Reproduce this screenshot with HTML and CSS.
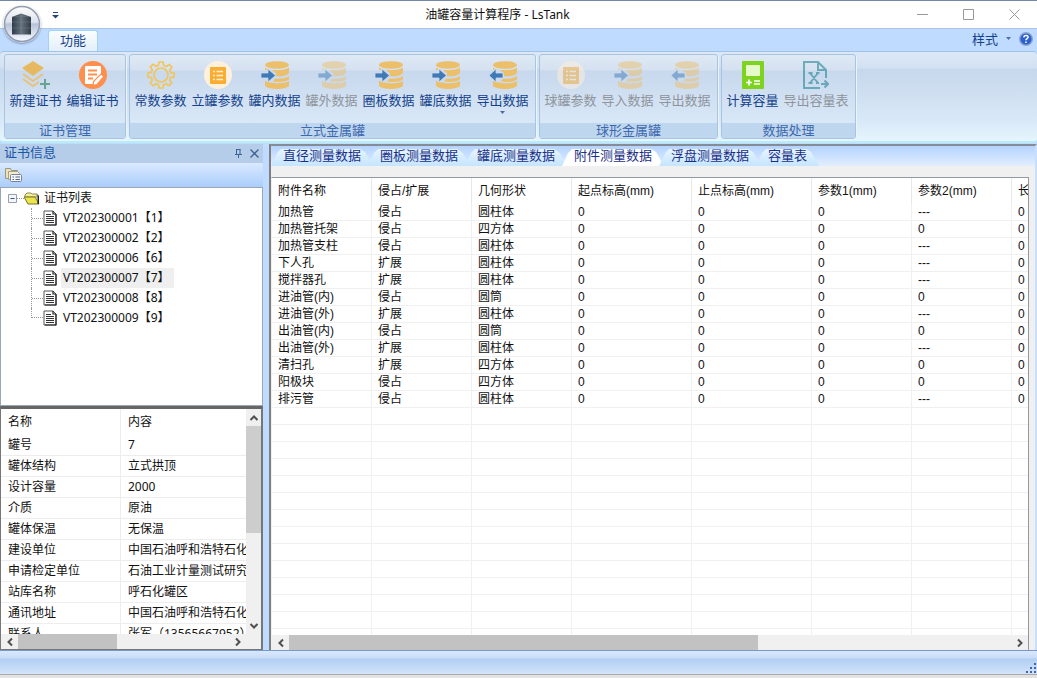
FILE: index.html
```html
<!DOCTYPE html>
<html lang="zh-CN">
<head>
    <meta charset="UTF-8">
    <meta name="viewport" content="width=device-width, initial-scale=1.0">
    <title>油罐容量计算程序 - LsTank</title>
    <link rel="stylesheet" href="styles.css">
</head>
<body>

    <!-- Shared icons -->
    <svg class="sprite" aria-hidden="true">
        <symbol id="database" viewBox="0 0 28 28">
            <g fill="#ecc06b">
                <ellipse cx="16" cy="4" rx="12" ry="3.800"/>
                <path d="M4 6.500c3 3.500 20 3.500 24 0v5.500c-2 2.800-8 3.800-13 3.200V12L10 8.500 4 9z"/>
                <path d="M14 17.500c5 .7 11 0 14-2.500v3.500c-3 2.500-11 3-16 2z"/>
                <path d="M4 19.500c5 3.500 20 3.500 24 .5V25c-4 4-20 4-24 0z"/>
            </g>
        </symbol>
        <symbol id="import" viewBox="0 0 28 28">
            <use href="#database" width="28" height="28"/>
            <path d="M0 12h7V8l7.500 6.500L7 21v-4H0z" fill="#4179b5" stroke="#cddcf0" stroke-width=".8"/>
        </symbol>
        <symbol id="export" viewBox="0 0 28 28">
            <use href="#database" width="28" height="28"/>
            <path d="M14 12H7V8l-7 6.500L7 21v-4h7z" fill="#4179b5" stroke="#cddcf0" stroke-width=".8"/>
        </symbol>
        <symbol id="list" viewBox="0 0 28 28">
            <circle cx="14" cy="14" r="14" fill="#fdf0dc"/>
            <rect x="6" y="6" width="16" height="17" rx="1" fill="#fbac32"/>
            <path d="M9 10.500h2M9 14.500h2M9 18.500h2M12.500 10.500H19M12.500 14.500H19M12.500 18.500H19" stroke="#fff0cf" stroke-width="1.700"/>
        </symbol>
        <symbol id="document" viewBox="0 0 14 16">
            <path d="M1 1h9l3 3v11H1z" fill="#fff" stroke="#555"/>
            <path d="M10 1v3h3M13 4v11H2" fill="none" stroke="#222" stroke-width="1.200"/>
            <path d="M3 4.500h5M3 6.500h8M3 8.500h8M3 10.500h8M3 12.500h8" stroke="#333"/>
        </symbol>
        <symbol id="chevron" viewBox="0 0 10 10">
            <path d="M3 1.500L6.500 5 3 8.500" fill="none" stroke="#505050" stroke-width="2"/>
        </symbol>
    </svg>

    <header class="titlebar">
        <div class="quick-access">
            <button class="orb" aria-label="LsTank">
                <svg width="38" height="38" viewBox="0 0 38 38">
                    <defs>
                        <linearGradient id="orbFill" x2="0" y2="1">
                            <stop offset="0" stop-color="#fdfdfe"/><stop offset=".45" stop-color="#dde2ec"/>
                            <stop offset=".5" stop-color="#b8c3d9"/><stop offset="1" stop-color="#f8faff"/>
                        </linearGradient>
                        <linearGradient id="tankFill">
                            <stop offset="0" stop-color="#303c47"/><stop offset=".5" stop-color="#65727d"/>
                            <stop offset="1" stop-color="#303b46"/>
                        </linearGradient>
                    </defs>
                    <circle cx="19" cy="19" r="17.500" fill="url(#orbFill)" stroke="#949dae" stroke-width="1.500"/>
                    <path d="M9 12l9-3.500L28 12v17.500H9z" fill="url(#tankFill)"/>
                    <path d="M9 12l9-1 10 1M18 9v20M9 17h19M9 23h19" fill="none" stroke="#7d8b96" stroke-width=".6" opacity=".6"/>
                </svg>
            </button>
            <button class="quick-menu" aria-label="自定义快速访问工具栏">
                <svg width="7" height="7" viewBox="0 0 7 7"><path d="M1 .5h5" stroke="#23467f"/><path d="M0 3h7L3.500 6.500z" fill="#23467f"/></svg>
            </button>
        </div>
        <div class="window-title">油罐容量计算程序 - LsTank</div>
        <div class="window-buttons">
            <button aria-label="最小化"><svg width="11" height="11"><path d="M0 5.500h11" stroke="#999"/></svg></button>
            <button aria-label="最大化"><svg width="11" height="11"><path d="M.5.5h10v10H.5z" fill="none" stroke="#999"/></svg></button>
            <button aria-label="关闭"><svg width="11" height="11"><path d="M.5.5l10 10M10.500.5l-10 10" stroke="#999"/></svg></button>
        </div>
    </header>

    <nav class="ribbon-tabs">
        <button class="ribbon-tab">功能</button>
        <div class="style-menu">
            <button class="style-button">样式
                <svg width="5" height="3" viewBox="0 0 5 3"><path d="M0 0h5L2.500 3z" fill="#4c6d9f"/></svg>
            </button>
            <button class="help" aria-label="帮助">
                <svg width="14" height="14" viewBox="0 0 14 14">
                    <circle cx="7" cy="7" r="6.300" fill="#2c62cf" stroke="#8da4cc" stroke-width="1.400"/>
                    <path d="M4.800 5.400C5 2.700 9.600 3 9.100 5.400 8.800 6.700 7 6.600 7 8.300M7 9.500v1.500" fill="none" stroke="#fff" stroke-width="1.500"/>
                </svg>
            </button>
        </div>
    </nav>

    <!-- Ribbon -->
    <section class="ribbon">
        <div class="group">
            <div class="group-buttons">
                <button class="tool">
                    <svg width="28" height="28" viewBox="0 0 28 28">
                        <path d="M11 0l11 7-11 8L0 7z" fill="#e6b960"/>
                        <path d="M1 13l10 7 10-7M1 18l10 7 6-4" fill="none" stroke="#e6c27c" stroke-width="2"/>
                        <path d="M23 18v10M18 23h10" stroke="#66a58f" stroke-width="2"/>
                    </svg>
                    <span>新建证书</span>
                </button>
                <button class="tool">
                    <svg width="28" height="28" viewBox="0 0 28 28">
                        <circle cx="14" cy="14" r="14" fill="#ff8f4d"/>
                        <path d="M7 5h14q1 0 1 1v8l-8 9H7q-1 0-1-1V6q0-1 1-1z" fill="#fff"/>
                        <path d="M9 9.500h9M9 13.500h9M9 17.500h5" stroke="#ff8f4d" stroke-width="1.800"/>
                        <path d="M22 13l3 2.500-7 8-4 1 .5-4z" fill="#fff" stroke="#ff8f4d" stroke-width="1.200"/>
                    </svg>
                    <span>编辑证书</span>
                </button>
            </div>
            <div class="group-name">证书管理</div>
        </div>

        <div class="group">
            <div class="group-buttons">
                <button class="tool">
                    <svg width="28" height="28" viewBox="0 0 28 28" fill="none" stroke="#f0c65c" stroke-width="1.700">
                        <path d="M12 1h4l.7 3.500 2.500 1 3-2 2.600 2.700-2 3 1 2.400L27 12v4l-3.300.6-1 2.500 2 3-2.700 2.600-3-2-2.400 1L16 27h-4l-.6-3.300-2.500-1-3 2-2.600-2.700 2-3-1-2.400L1 16v-4l3.300-.6 1-2.500-2-3 2.700-2.600 3 2 2.400-1z"/>
                        <circle cx="14" cy="14" r="7"/>
                    </svg>
                    <span>常数参数</span>
                </button>
                <button class="tool"><svg width="28" height="28"><use href="#list"/></svg><span>立罐参数</span></button>
                <button class="tool"><svg width="28" height="28"><use href="#import"/></svg><span>罐内数据</span></button>
                <button class="tool" disabled><svg width="28" height="28"><use href="#import"/></svg><span>罐外数据</span></button>
                <button class="tool"><svg width="28" height="28"><use href="#import"/></svg><span>圈板数据</span></button>
                <button class="tool"><svg width="28" height="28"><use href="#import"/></svg><span>罐底数据</span></button>
                <button class="tool">
                    <svg width="28" height="28"><use href="#export"/></svg><span>导出数据</span>
                    <svg class="drop" width="5" height="3" viewBox="0 0 5 3"><path d="M0 0h5L2.500 3z" fill="#4c6d9f"/></svg>
                </button>
            </div>
            <div class="group-name">立式金属罐</div>
        </div>

        <div class="group">
            <div class="group-buttons">
                <button class="tool" disabled><svg width="28" height="28"><use href="#list"/></svg><span>球罐参数</span></button>
                <button class="tool" disabled><svg width="28" height="28"><use href="#import"/></svg><span>导入数据</span></button>
                <button class="tool" disabled><svg width="28" height="28"><use href="#export"/></svg><span>导出数据</span></button>
            </div>
            <div class="group-name">球形金属罐</div>
        </div>

        <div class="group">
            <div class="group-buttons">
                <button class="tool">
                    <svg width="22" height="28" viewBox="0 0 22 28">
                        <rect width="22" height="28" rx="1" fill="#7ed321"/>
                        <rect x="4" y="4" width="14" height="11" rx="1" fill="#e4fac9"/>
                        <path d="M4 21.500h6M7 18.500v6M12 20h6M12 23h6" stroke="#fff" stroke-width="1.700"/>
                    </svg>
                    <span>计算容量</span>
                </button>
                <button class="tool wide" disabled>
                    <svg width="26" height="28" viewBox="0 0 26 28" fill="none" stroke="#087580" stroke-width="2">
                        <path d="M23 17V9l-8-8H1v26h16M15 1v8h8"/>
                        <path d="M7 12l8 10M15 12L7 22M5.500 12h4M13 12h3.500M5.500 22h4M13 22h3" stroke-width="1.900"/>
                        <path d="M18 23h7M21.500 19.500L25 23l-3.500 3.500"/>
                    </svg>
                    <span>导出容量表</span>
                </button>
            </div>
            <div class="group-name">数据处理</div>
        </div>
    </section>

    <main class="workspace">
        <aside class="side-panel">
            <div class="panel-title">
                <span>证书信息</span>
                <button aria-label="自动隐藏"><svg width="7" height="9" viewBox="0 0 7 9"><path d="M1.500 0v5M1.500.5h4M5 0v5M0 5.500h7M3.500 5v4" fill="none" stroke="#3d6394"/></svg></button>
                <button aria-label="关闭面板"><svg width="9" height="9" viewBox="0 0 9 9"><path d="M.5.5l8 8M8.500.5l-8 8" stroke="#3d6394" stroke-width="1.400"/></svg></button>
            </div>
            <div class="panel-tools">
                <button aria-label="属性">
                    <svg width="17" height="16" viewBox="0 0 17 16">
                        <path d="M.5 1.500h5l1 2h6v8H.5z" fill="#efe2ae" stroke="#9a9689"/>
                        <path d="M3.500 4.500h9l2 2v6h-11z" fill="#f4eccd" stroke="#a6a18f"/>
                        <rect x="5.500" y="7.500" width="11" height="7" rx="1" fill="#f5f7fb" stroke="#7582a0"/>
                        <path d="M7.500 10h1.500M10.500 10H15M7.500 12.500H9M10.500 12.500H15" stroke="#53658c"/>
                    </svg>
                </button>
            </div>

            <div class="tree">
                <div class="tree-root">
                    <svg width="16" height="16" viewBox="0 0 16 16"><path d="M.5 4.500h8v8h-8z" fill="#f4f6fa" stroke="#969faa"/><path d="M2.500 8.500h4" stroke="#31539a"/><path d="M9 8.500h7" stroke="#999" stroke-dasharray="1 1"/></svg>
                    <svg width="16" height="14" viewBox="0 0 16 14"><path d="M1 4l2-2h4l1 1h5v3H1z" fill="#f7f09a" stroke="#8d8a4e"/><path d="M0 6h11l4 7H4z" fill="#ece64b" stroke="#77742f"/><path d="M13.500 3v10H15V5z" fill="#222"/></svg>
                    <span>证书列表</span>
                </div>
                <ul id="certificates"></ul>
            </div>

            <div class="details">
                <div class="details-view">
                    <div class="details-table">
                        <table>
                            <thead><tr><th>名称</th><th>内容</th></tr></thead>
                            <tbody>
                                <tr><td>罐号</td><td>7</td></tr>
                                <tr><td>罐体结构</td><td>立式拱顶</td></tr>
                                <tr><td>设计容量</td><td>2000</td></tr>
                                <tr><td>介质</td><td>原油</td></tr>
                                <tr><td>罐体保温</td><td>无保温</td></tr>
                                <tr><td>建设单位</td><td>中国石油呼和浩特石化</td></tr>
                                <tr><td>申请检定单位</td><td>石油工业计量测试研究</td></tr>
                                <tr><td>站库名称</td><td>呼石化罐区</td></tr>
                                <tr><td>通讯地址</td><td>中国石油呼和浩特石化</td></tr>
                                <tr><td>联系人</td><td>张军（13565667952）</td></tr>
                            </tbody>
                        </table>
                    </div>
                    <div class="scroll vertical">
                        <button aria-label="向上"><svg class="up" width="10" height="10"><use href="#chevron"/></svg></button>
                        <div class="track"><div class="thumb"></div></div>
                        <button aria-label="向下"><svg class="down" width="10" height="10"><use href="#chevron"/></svg></button>
                    </div>
                </div>
                <div class="scroll">
                    <button aria-label="向左"><svg class="left" width="10" height="10"><use href="#chevron"/></svg></button>
                    <div class="track"><div class="thumb"></div></div>
                    <button aria-label="向右"><svg width="10" height="10"><use href="#chevron"/></svg></button>
                </div>
            </div>
        </aside>

        <section class="content">
            <div class="data-tabs">
                <button>直径测量数据</button>
                <button>圈板测量数据</button>
                <button>罐底测量数据</button>
                <button class="active">附件测量数据</button>
                <button>浮盘测量数据</button>
                <button>容量表</button>
            </div>
            <div class="data-frame">
                <div class="data-view">
                    <table class="data-table">
                        <colgroup>
                            <col class="narrow"><col class="narrow"><col class="narrow">
                            <col class="medium"><col class="medium">
                            <col class="narrow"><col class="narrow"><col>
                        </colgroup>
                        <thead>
                            <tr><th>附件名称</th><th>侵占/扩展</th><th>几何形状</th><th>起点标高(mm)</th><th>止点标高(mm)</th><th>参数1(mm)</th><th>参数2(mm)</th><th>长</th></tr>
                        </thead>
                        <tbody id="attachments"></tbody>
                    </table>
                </div>
                <div class="scroll data-scroll">
                    <button aria-label="向左"><svg class="left" width="10" height="10"><use href="#chevron"/></svg></button>
                    <div class="track"><div class="thumb"></div></div>
                    <button aria-label="向右"><svg width="10" height="10"><use href="#chevron"/></svg></button>
                </div>
            </div>
        </section>
    </main>

    <footer class="statusbar">
        <svg width="11" height="11" viewBox="0 0 11 11" fill="#4467a3"><path d="M8 0h2v2H8zM4 4h2v2H4zM8 4h2v2H8zM0 8h2v2H0zM4 8h2v2H4zM8 8h2v2H8z"/></svg>
    </footer>
    <div class="desktop-edge"></div>

    <script>
        const certificates = [
            ['VT202300001', 1], ['VT202300002', 2], ['VT202300006', 6],
            ['VT202300007', 7], ['VT202300008', 8], ['VT202300009', 9]
        ];
        const selected = 7;

        const attachments = [
            ['加热管', '侵占', '圆柱体', '---'],
            ['加热管托架', '侵占', '四方体', '0'],
            ['加热管支柱', '侵占', '圆柱体', '---'],
            ['下人孔', '扩展', '圆柱体', '---'],
            ['搅拌器孔', '扩展', '圆柱体', '---'],
            ['进油管(内)', '侵占', '圆筒', '0'],
            ['进油管(外)', '扩展', '圆柱体', '---'],
            ['出油管(内)', '侵占', '圆筒', '0'],
            ['出油管(外)', '扩展', '圆柱体', '---'],
            ['清扫孔', '扩展', '四方体', '0'],
            ['阳极块', '侵占', '四方体', '0'],
            ['排污管', '侵占', '圆柱体', '---']
        ];
        const emptyRows = 14;

        document.getElementById('certificates').innerHTML = certificates.map(([code, tank]) =>
            `<li><svg width="14" height="16"><use href="#document"/></svg><span class="${tank === selected ? 'selected' : ''}">${code}【${tank}】</span></li>`
        ).join('');

        const rows = attachments.map(([name, kind, shape, param2]) =>
            [name, kind, shape, '0', '0', '0', param2, '0']
        );
        for (let i = 0; i < emptyRows; i++) {
            rows.push(Array(8).fill(''));
        }
        document.getElementById('attachments').innerHTML = rows.map(row =>
            '<tr>' + row.map(cell => `<td>${cell}</td>`).join('') + '</tr>'
        ).join('');
    </script>

</body>
</html>
```
FILE: styles.css
```css
* {
    box-sizing: border-box;
}
body {
    margin: 0;
    height: 100vh;
    display: flex;
    flex-direction: column;
    overflow: hidden;
    position: relative;
    border-top: 1px solid #7387a9;
    background-color: #bfdbff;
    font-family: "Noto Sans", "Noto Sans CJK SC", sans-serif;
    font-size: 12px;
    line-height: 16px;
    color: #111;
}
button {
    padding: 0;
    border: none;
    background: none;
    font: inherit;
    color: inherit;
    cursor: pointer;
}
svg {
    display: block;
    flex: none;
}
table {
    border-collapse: separate;
    border-spacing: 0;
    table-layout: fixed;
}
th, td {
    padding: 0 6px;
    font-weight: normal;
    text-align: left;
    white-space: nowrap;
    overflow: hidden;
}
.sprite {
    position: absolute;
    width: 0;
    height: 0;
}

/* Title bar */
.titlebar {
    display: flex;
    flex: none;
    height: 27px;
    background-color: #fff;
}
.quick-access {
    width: 96px;
    padding-left: 52px;
}
.orb {
    position: absolute;
    left: 3px;
    top: 4px;
    border-radius: 50%;
    box-shadow: 0 1px 2px #8b98b0;
}
.quick-menu {
    padding: 11px 0;
}
.window-title {
    flex: 1;
    text-align: center;
    line-height: 27px;
}
.window-buttons {
    display: flex;
}
.window-buttons button {
    width: 46px;
    display: flex;
    align-items: center;
    justify-content: center;
}

/* Ribbon tabs */
.ribbon-tabs {
    display: flex;
    flex: none;
    justify-content: space-between;
    height: 23px;
    padding: 1px 4px 0 48px;
    border-top: 1px solid #a9c4e9;
    font-size: 13px;
    color: #15428b;
}
.ribbon-tab {
    width: 50px;
    padding-bottom: 3px;
    border: 1px solid #a2d3f1;
    border-bottom: none;
    border-radius: 3px 3px 0 0;
    background: linear-gradient(#fafdff, #e3effb);
}
.style-menu, .style-button {
    display: flex;
    align-items: center;
    gap: 8px;
}
.style-menu {
    padding-bottom: 4px;
}

/* Ribbon */
.ribbon {
    display: flex;
    flex: none;
    gap: 3px;
    height: 92px;
    padding: 2px 4px;
    border: 1px solid #9fc3e8;
    border-width: 1px 0 0;
    border-bottom: 2px solid #b8ecf7;
    border-radius: 4px;
    background: linear-gradient(#dce8f6 0, #d3e1f2 16px, #c7d7ec 17px, #d9e9f8 70px, #e5f6ff);
}
.group {
    display: flex;
    flex-direction: column;
    height: 85px;
    border: 1px solid #a7c4e3;
    border-radius: 3px;
    box-shadow: 1px 1px 0 #eaf4fd;
    background: linear-gradient(#dfe9f5 0, #d5e1f1 15px, #c8d8ed 16px, #d9e8f7 68px);
}
.group-buttons {
    display: flex;
    flex: 1;
    padding: 6px 4px 0 2px;
}
.tool {
    width: 57px;
    display: flex;
    flex-direction: column;
    align-items: center;
    gap: 3px;
    font-size: 13px;
    color: #15428b;
    white-space: nowrap;
}
.tool.wide {
    width: 70px;
}
.tool:disabled {
    color: #8f949c;
    cursor: default;
}
.tool:disabled svg {
    opacity: 0.5;
}
.group-name {
    height: 15px;
    line-height: 14px;
    text-align: center;
    font-size: 13px;
    color: #3c68ad;
    background-color: #bfd6ef;
}

/* Left panel */
.workspace {
    display: flex;
    flex: 1;
    min-height: 0;
    padding-top: 1px;
}
.side-panel {
    display: flex;
    flex-direction: column;
    width: 263px;
    margin-right: 6px;
}
.panel-title {
    display: flex;
    align-items: center;
    gap: 8px;
    height: 19px;
    padding: 0 4px;
    font-size: 13px;
    color: #1c56a6;
    background-color: #b5cde8;
}
.panel-title span {
    flex: 1;
    padding-bottom: 3px;
}
.panel-tools {
    height: 24px;
    padding: 4px 5px;
    background: linear-gradient(#d9e9ff, #abcdfa);
}
.tree {
    flex: 1;
    min-height: 0;
    border: 1px solid #9aa7b8;
    background-color: #fff;
}
.tree-root, .tree li {
    display: flex;
    align-items: center;
    height: 20px;
}
.tree-root {
    padding-left: 7px;
}
.tree-root span {
    padding-left: 4px;
}
.tree ul {
    margin: 0;
    padding-left: 30px;
    list-style: none;
}
.tree li::before {
    content: "";
    width: 11px;
    height: 20px;
    border-left: 1px dotted #999;
    background: repeating-linear-gradient(90deg, #999 0 1px, transparent 1px 2px) 0 10px / 11px 1px no-repeat;
}
.tree li:last-child::before {
    height: 10px;
    align-self: flex-start;
    background-position: 0 9px;
}
.tree li span {
    margin-left: 4px;
    padding: 0 0 0 2px;
    line-height: 20px;
}
.tree li .selected {
    padding-right: 4px;
    background-color: #efefef;
}
.details {
    display: flex;
    flex-direction: column;
    flex: none;
    height: 244px;
    border: 1px solid #777;
    border-top: 3px solid #666;
    border-right: 2px solid #777;
    background-color: #fff;
}
.details-view {
    display: flex;
    flex: 1;
    min-height: 0;
}
.details-table {
    flex: 1;
    min-width: 0;
    overflow: hidden;
}
.details table {
    width: 100%;
}
.details th {
    height: 26px;
}
.details td {
    height: 21px;
    line-height: 20px;
    border-bottom: 1px solid #ededed;
}
.details th:first-child, .details td:first-child {
    width: 120px;
    padding-left: 7px;
    border-right: 1px solid #ededed;
}
.details th:last-child, .details td:last-child {
    padding-left: 7px;
    padding-right: 0;
    text-overflow: clip;
}

/* Scroll bars */
.scroll {
    display: flex;
    flex: none;
    height: 15px;
    background-color: #f0f0f0;
}
.scroll button {
    width: 17px;
    display: flex;
    align-items: center;
    justify-content: center;
}
.scroll .track {
    flex: 1;
}
.scroll .thumb {
    width: 47%;
    height: 100%;
    background-color: #c2c2c2;
}
.scroll.vertical {
    flex-direction: column;
    width: 15px;
    height: auto;
}
.vertical button {
    width: 15px;
    height: 17px;
}
.vertical .thumb {
    width: 100%;
    height: 56%;
    background-color: #cdcdcd;
}
.details > .scroll {
    padding-right: 15px;
}
.left {
    transform: rotate(180deg);
}
.up {
    transform: rotate(-90deg);
}
.down {
    transform: rotate(90deg);
}

/* Data area */
.content {
    display: flex;
    flex-direction: column;
    flex: 1;
    min-width: 0;
    border-top: 2px solid #858c98;
    border-left: 2px solid #808080;
    border-right: 2px solid #c7dffb;
    background-color: #f0f0f0;
}
.data-tabs {
    display: flex;
    flex: none;
    height: 20px;
    padding-top: 3px;
    padding-left: 8px;
    background: linear-gradient(#b4d3ff, #e2eefe);
    font-size: 13px;
    color: #1c2f86;
}
.data-tabs button {
    height: 17px;
    margin-left: -8px;
    padding: 0 15px 4px 12px;
    line-height: 13px;
    white-space: nowrap;
    background: linear-gradient(#e6f5ff, #c5e5ff);
    clip-path: polygon(0 100%, 6px 4px, 10px 0, calc(100% - 16px) 0, calc(100% - 11px) 3px, calc(100% - 3px) 100%);
}
.data-tabs .active {
    background: #fff;
}
.data-frame {
    display: flex;
    flex-direction: column;
    flex: 1;
    min-height: 0;
    margin: 11px 6px 0 0;
    border: 1px solid #9299a3;
    border-left-color: #f0f0f0;
    border-bottom: none;
    background-color: #fff;
}
.data-view {
    flex: 1;
    min-height: 0;
    overflow: hidden;
}
.data-table {
    width: 100%;
    font-family: "Liberation Sans", "Noto Sans CJK SC", sans-serif;
}
.narrow {
    width: 100px;
}
.medium {
    width: 120px;
}
.data-table th {
    height: 26px;
    border-right: 1px solid #e8e8e8;
}
.data-table td {
    height: 17px;
    line-height: 16px;
    border-right: 1px solid #f0f0f0;
    border-bottom: 1px solid #f0f0f0;
}
.data-table th:last-child, .data-table td:last-child {
    padding-right: 0;
    border-right: none;
}
.data-scroll .thumb {
    width: 65%;
}

/* Status bar */
.statusbar {
    display: flex;
    flex: none;
    justify-content: flex-end;
    align-items: flex-end;
    height: 24px;
    border-top: 1px solid #7399cf;
    background: linear-gradient(#dbe8fb 0, #c8dcf8 7px, #b1cef3 8px, #d3e4fa);
}
.desktop-edge {
    flex: none;
    height: 4px;
    border-top: 1px solid #aaa;
    background-color: #e4e3e2;
}
```
